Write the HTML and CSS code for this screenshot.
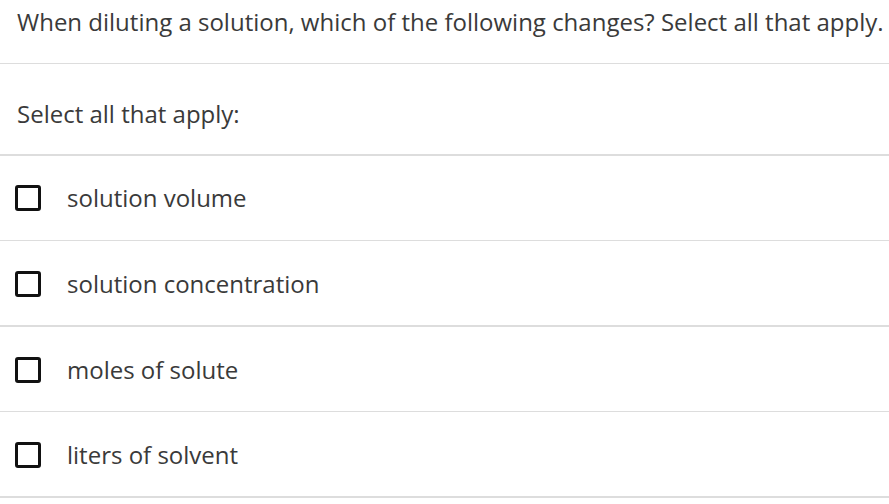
FILE: index.html
```html
<!DOCTYPE html>
<html>
<head>
<meta charset="utf-8">
<link rel="stylesheet" href="styles.css">
</head>
<body>
<div class="question">
  <div class="stem">When diluting a solution, which of the following changes? Select all that apply.</div>
  <div class="prompt">Select all that apply:</div>
  <ul class="options">
    <li class="option"><span class="box"></span><span class="label">solution volume</span></li>
    <li class="option"><span class="box"></span><span class="label">solution concentration</span></li>
    <li class="option"><span class="box"></span><span class="label">moles of solute</span></li>
    <li class="option"><span class="box"></span><span class="label">liters of solvent</span></li>
  </ul>
</div>
</body>
</html>
```
FILE: styles.css
```css
html, body { margin: 0; padding: 0; background: #fff; }
body {
  font-family: "Open Sans", "Liberation Sans", sans-serif;
  color: #3a3a3a;
  font-size: 24px;
}
.question { width: 889px; }
.stem {
  padding: 6px 0 0 17px;
  height: 64px;
  box-sizing: border-box;
  line-height: 32px;
  border-bottom: 1px solid #dddddd;
  white-space: nowrap;
}
.prompt {
  height: 92px;
  box-sizing: border-box;
  padding: 34px 0 0 17px;
  line-height: 32px;
  border-bottom: 2px solid #dddddd;
}
.options { list-style: none; margin: 0; padding: 0; }
.option {
  display: flex;
  align-items: center;
  height: 85px;
  box-sizing: border-box;
  padding-left: 15px;
  padding-top: 1px;
  border-bottom: 1px solid #dddddd;
}
.option:nth-child(even) { height: 86px; border-bottom-width: 2px; padding-top: 2px; }
.option:first-child { padding-top: 0; }
.box {
  width: 26px; height: 26px;
  box-sizing: border-box;
  border: 3px solid #111;
  border-radius: 3px;
  margin-right: 26px;
  flex: none;
}
.label { line-height: 32px; }
```
